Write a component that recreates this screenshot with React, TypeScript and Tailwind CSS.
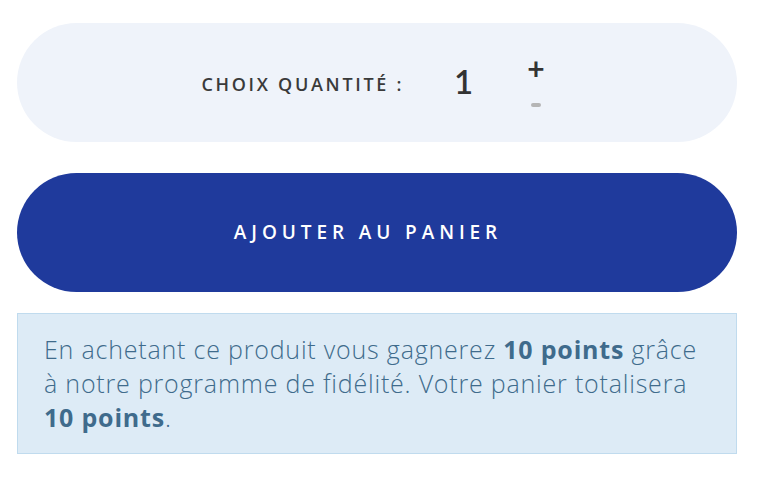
import React from "react";

export default function App() {
  return (
    <div className="w-[758px] h-[486px] bg-white pt-[23px] px-[17px] pr-[21px]" style={{ fontFamily: "'Open Sans', Lato, sans-serif" }}>
      <div className="h-[119px] rounded-[60px] bg-[#eff3fa] flex items-center justify-center pr-[8px]">
        <span className="text-[18px] font-semibold text-[#3a3a3a] tracking-[2.7px] mt-[4px] whitespace-nowrap">CHOIX QUANTITÉ :</span>
        <span className="ml-[50px] text-[33px] font-semibold text-[#333333] leading-none mt-[-2px]" style={{ fontFamily: "Lato, sans-serif" }}>1</span>
        <div className="ml-[54px] flex flex-col items-center mt-[-6px]">
          <span className="text-[30px] font-bold text-[#333333] leading-none" style={{ fontFamily: "Lato, sans-serif" }}>+</span>
          <span className="mt-[20px] w-[10px] h-[4px] rounded-full bg-[#b5b5b5]" />
        </div>
      </div>
      <button className="mt-[31px] w-full h-[119px] rounded-[60px] bg-[#1f3a9c] text-white text-[19px] font-semibold tracking-[4.9px] flex items-center justify-center pr-[18px]">
        AJOUTER AU PANIER
      </button>
      <div className="mt-[21px] h-[141px] bg-[#ddebf6] border border-[#c0dbee] pl-[26px] pr-[30px] pt-[18px] text-[25px] leading-[34px] tracking-[0.8px] font-light text-[#3f6b8c]">
        En achetant ce produit vous gagnerez <b className="font-bold">10 points</b> grâce à notre programme de fidélité. Votre panier totalisera <b className="font-bold">10 points</b>.
      </div>
    </div>
  );
}
